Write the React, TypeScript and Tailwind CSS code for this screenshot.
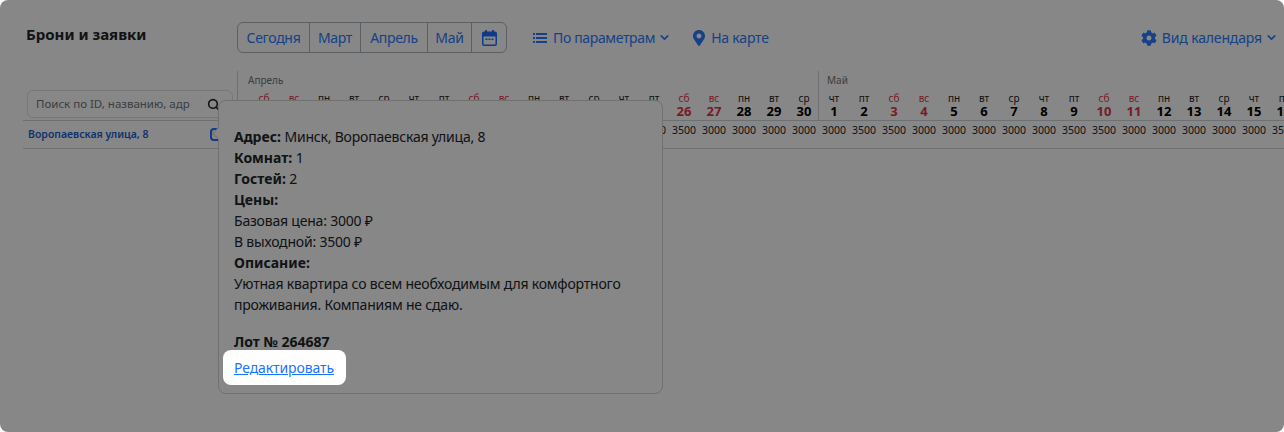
import { ChevronDown, Search } from "lucide-react";
import { FaCog, FaMapMarkerAlt } from "react-icons/fa";

const DOW = ["вс", "пн", "вт", "ср", "чт", "пт", "сб"];

type Day = { num: number; dow: string; weekend: boolean; price: string };

function buildDays(from: number, to: number, firstDow: number, cheap: number[]): Day[] {
  const days: Day[] = [];
  for (let num = from; num <= to; num++) {
    const idx = (firstDow + num - from) % 7;
    days.push({
      num,
      dow: DOW[idx],
      weekend: idx === 0 || idx === 6,
      price: cheap.includes(num) ? "3500" : "3000",
    });
  }
  return days;
}

const APRIL = buildDays(12, 30, 6, [18, 19, 25, 26]);
const MAY = buildDays(1, 16, 4, [2, 3, 9, 10, 16]);

function CalendarIcon() {
  return (
    <svg width="15" height="16" viewBox="0 0 15 16" fill="currentColor">
      <rect x="3" y="0" width="2" height="3" rx="0.5" />
      <rect x="10" y="0" width="2" height="3" rx="0.5" />
      <path d="M2 1.5h11a2 2 0 0 1 2 2v10.5a2 2 0 0 1-2 2H2a2 2 0 0 1-2-2V3.500a2 2 0 0 1 2-2Zm-.5 5V14a.5.5 0 0 0 .5.5h11a.5.5 0 0 0 .5-.5V6.500Z" fillRule="evenodd" />
      <rect x="3.500" y="8.500" width="2" height="1.500" />
      <rect x="6.500" y="8.500" width="2" height="1.500" />
      <rect x="9.500" y="8.500" width="2" height="1.500" />
    </svg>
  );
}

function ListIcon() {
  return (
    <svg width="14" height="10" viewBox="0 0 14 10" fill="currentColor">
      <rect x="0" y="0" width="2" height="2" />
      <rect x="3" y="0" width="11" height="2" />
      <rect x="0" y="4" width="2" height="2" />
      <rect x="3" y="4" width="11" height="2" />
      <rect x="0" y="8" width="2" height="2" />
      <rect x="3" y="8" width="11" height="2" />
    </svg>
  );
}

function DayCol({ day }: { day: Day }) {
  return (
    <div className="w-[30px] shrink-0 text-center">
      <div className={`h-[12px] text-[10px] leading-[13px] ${day.weekend ? "text-[#e0364a]" : "text-[#212529]"}`}>
        {day.dow}
      </div>
      <div className={`h-[15px] text-[13px] font-bold leading-[15px] ${day.weekend ? "text-[#e0364a]" : "text-black"}`}>
        {day.num}
      </div>
    </div>
  );
}

function PriceCol({ day }: { day: Day }) {
  return (
    <div className="w-[30px] shrink-0 text-center text-[10.5px] leading-[18px] whitespace-nowrap text-[#212529]">
      {day.price}
    </div>
  );
}

function Tab({ label, width }: { label: string; width: string }) {
  return (
    <button className={`flex h-full items-center justify-center border-r border-[#adb5bd] text-[14px] tracking-[-0.3px] text-[#2a7bff] ${width}`}>
      {label}
    </button>
  );
}

export default function App() {
  return (
    <div className="h-[432px] w-[1284px] bg-white font-['Noto_Sans','Open_Sans',sans-serif]">
      <main className="relative h-full overflow-hidden rounded-lg bg-white">
        <header className="flex h-[71px] items-start pt-[22px]">
          <h1 className="w-[237px] shrink-0 pl-[26px] text-[15px] font-bold leading-6 text-[#212529]">
            Брони и заявки
          </h1>
          <div className="flex h-[31px] items-center rounded-md border border-[#adb5bd]">
            <Tab label="Сегодня" width="w-[72px]" />
            <Tab label="Март" width="w-[51px]" />
            <Tab label="Апрель" width="w-[67px]" />
            <Tab label="Май" width="w-[44px]" />
            <button className="flex h-full w-[34px] items-center justify-center text-[#1f6fff]">
              <CalendarIcon />
            </button>
          </div>
          <button className="ml-[26px] flex h-[31px] items-center text-[14px] tracking-[-0.35px] text-[#2a7bff]">
            <ListIcon />
            <span className="ml-[6px]">По параметрам</span>
            <ChevronDown size={13} strokeWidth={3} className="ml-[3px]" />
          </button>
          <button className="ml-[20px] flex h-[31px] items-center text-[14px] tracking-[-0.2px] text-[#2a7bff]">
            <FaMapMarkerAlt size={16} />
            <span className="ml-[4px]">На карте</span>
          </button>
          <button className="ml-auto mr-[6px] flex h-[31px] items-center text-[14px] tracking-[-0.15px] text-[#2a7bff]">
            <FaCog size={16} />
            <span className="ml-[5px]">Вид календаря</span>
            <ChevronDown size={13} strokeWidth={3} className="ml-[3px]" />
          </button>
        </header>

        <section className="flex h-[49px]">
          <div className="flex w-[237px] shrink-0 items-end pb-[2px] pl-[27px] pr-[4px]">
            <div className="flex h-[28px] w-full items-center justify-between rounded-md border border-[#dee2e6] pl-[8px] pr-[12px] text-[11.5px] text-[#6c757d]">
              <span>Поиск по ID, названию, адр</span>
              <Search size={13} strokeWidth={3} className="text-[#212529]" />
            </div>
          </div>
          <div className="flex min-w-0 flex-1 overflow-hidden">
            <div className="w-[12px] shrink-0 border-l border-[#ced4da]" />
            <div className="shrink-0">
              <div className="-ml-px h-[21px] pt-[3px] text-[10px] leading-[13px] text-[#6c757d]">Апрель</div>
              <div className="flex">
                {APRIL.map((d) => (
                  <DayCol key={d.num} day={d} />
                ))}
              </div>
            </div>
            <div className="-ml-px shrink-0 border-l border-[#ced4da]">
              <div className="h-[21px] pl-[8px] pt-[3px] text-[10px] leading-[13px] text-[#6c757d]">Май</div>
              <div className="flex">
                {MAY.map((d) => (
                  <DayCol key={d.num} day={d} />
                ))}
              </div>
            </div>
          </div>
        </section>

        <section className="ml-[23px] flex h-[29px] border-y border-[#ced4da]">
          <div className="flex w-[215px] shrink-0 items-center justify-between pl-[5px] pr-[16px] text-[10.5px] font-semibold text-[#1a5fd0]">
            <span>Воропаевская улица, 8</span>
            <span className="h-[13px] w-[12px] rounded-[4px] border-2 border-[#1f6fff]" />
          </div>
          <div className="flex min-w-0 flex-1 overflow-hidden pl-[11px]">
            {APRIL.concat(MAY).map((d) => (
              <PriceCol key={`${d.num}-${d.dow}`} day={d} />
            ))}
          </div>
        </section>

        <aside className="absolute left-[218px] top-[100px] h-[294px] w-[445px] rounded-lg border border-[#d4d4d4] bg-white px-[15px] pt-[25px] text-[14px] leading-[21px] tracking-[-0.2px] text-[#212529] [&_b]:tracking-normal">
          <span className="absolute -left-[5px] top-[28px] h-[9px] w-[9px] rotate-45 border-b border-l border-[#d4d4d4] bg-white" />
          <p><b>Адрес:</b> Минск, Воропаевская улица, 8</p>
          <p><b>Комнат:</b> 1</p>
          <p><b>Гостей:</b> 2</p>
          <p><b>Цены:</b></p>
          <p>Базовая цена: 3000 ₽</p>
          <p>В выходной: 3500 ₽</p>
          <p><b>Описание:</b></p>
          <p>Уютная квартира со всем необходимым для комфортного проживания. Компаниям не сдаю.</p>
          <p className="mt-[16px]"><b>Лот № 264687</b></p>
          <a
            href="#"
            className="relative z-10 -ml-[11px] mt-[-2px] inline-block rounded-lg bg-white py-[7px] pl-[11px] pr-[12px] tracking-[-0.1px] text-[#1a73ff] underline shadow-[0_0_0_9999px_rgba(0,0,0,0.47)]"
          >
            Редактировать
          </a>
        </aside>
      </main>
    </div>
  );
}
